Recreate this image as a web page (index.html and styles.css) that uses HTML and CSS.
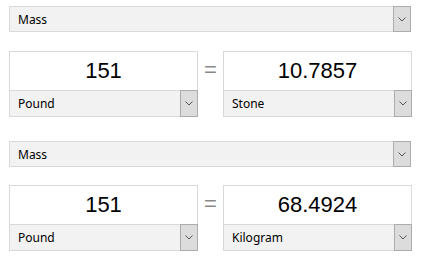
FILE: index.html
```html
<!DOCTYPE html>
<html lang="en">
<head>
    <meta charset="UTF-8">
    <title>Converter</title>
    <link rel="stylesheet" href="styles.css">
</head>
<body>
    <div class="converter">
        <div class="category">
            <span class="category-label">Mass</span>
            <span class="drop-btn"><svg width="8" height="5" viewBox="0 0 8 5"><path d="M0.5 0.5 L4 4 L7.5 0.5" fill="none" stroke="#555" stroke-width="1"/></svg></span>
        </div>
        <div class="row">
            <div class="card">
                <div class="value">151</div>
                <div class="unit">
                    <span class="unit-label">Pound</span>
                    <span class="drop-btn"><svg width="8" height="5" viewBox="0 0 8 5"><path d="M0.5 0.5 L4 4 L7.5 0.5" fill="none" stroke="#555" stroke-width="1"/></svg></span>
                </div>
            </div>
            <div class="equals">=</div>
            <div class="card">
                <div class="value">10.7857</div>
                <div class="unit">
                    <span class="unit-label">Stone</span>
                    <span class="drop-btn"><svg width="8" height="5" viewBox="0 0 8 5"><path d="M0.5 0.5 L4 4 L7.5 0.5" fill="none" stroke="#555" stroke-width="1"/></svg></span>
                </div>
            </div>
        </div>
    </div>

    <div class="converter second">
        <div class="category">
            <span class="category-label">Mass</span>
            <span class="drop-btn"><svg width="8" height="5" viewBox="0 0 8 5"><path d="M0.5 0.5 L4 4 L7.5 0.5" fill="none" stroke="#555" stroke-width="1"/></svg></span>
        </div>
        <div class="row">
            <div class="card">
                <div class="value">151</div>
                <div class="unit">
                    <span class="unit-label">Pound</span>
                    <span class="drop-btn"><svg width="8" height="5" viewBox="0 0 8 5"><path d="M0.5 0.5 L4 4 L7.5 0.5" fill="none" stroke="#555" stroke-width="1"/></svg></span>
                </div>
            </div>
            <div class="equals">=</div>
            <div class="card">
                <div class="value">68.4924</div>
                <div class="unit">
                    <span class="unit-label">Kilogram</span>
                    <span class="drop-btn"><svg width="8" height="5" viewBox="0 0 8 5"><path d="M0.5 0.5 L4 4 L7.5 0.5" fill="none" stroke="#555" stroke-width="1"/></svg></span>
                </div>
            </div>
        </div>
    </div>
</body>
</html>
```

FILE: styles.css
```css
body {
    margin: 0;
    padding: 6px 0 0 9px;
    background-color: #fff;
    font-family: "Noto Sans", "Open Sans", sans-serif;
    font-size: 12px;
    color: #000;
}

* {
    box-sizing: border-box;
}

.converter {
    width: 403px;
    margin-bottom: 24px;
}

.converter.second {
    margin-bottom: 0;
}

.category {
    display: flex;
    width: 402px;
    height: 26px;
    background-color: #f2f2f2;
    border: 1px solid #dadada;
}

.category-label,
.unit-label {
    flex: 1;
    display: flex;
    align-items: center;
    padding-left: 8px;
}

.drop-btn {
    display: flex;
    align-items: center;
    justify-content: center;
    width: 18px;
    margin: -1px -1px -1px 0;
    background-color: #dcdcdc;
    border: 1px solid #acacac;
}

.row {
    display: grid;
    grid-template-columns: 189px 1fr 189px;
    margin-top: 19px;
}

.second .row {
    margin-top: 18px;
}

.card {
    border: 1px solid #d9d9d9;
}

.value {
    height: 38px;
    display: flex;
    align-items: center;
    justify-content: center;
    font-family: "Liberation Sans", Arial, sans-serif;
    font-size: 22px;
    background-color: #fff;
}

.unit {
    display: flex;
    height: 26px;
    background-color: #f2f2f2;
    border-top: 1px solid #d9d9d9;
}

.equals {
    display: flex;
    justify-content: center;
    padding-top: 6px;
    font-family: "Liberation Sans", Arial, sans-serif;
    font-size: 22px;
    color: #888;
}
```
